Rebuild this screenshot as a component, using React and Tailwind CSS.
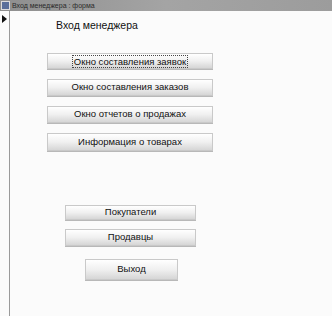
import React from 'react';

const buttonBase =
	'flex items-center justify-center border border-[#c9c9c9] bg-gradient-to-b from-[#ffffff] via-[#f0f0f0] to-[#d6d6d6] text-[9.5px] text-[#111] shadow-[0_1px_0_#b8b8b8]';

const MenuButton = ({ label, className, focused }) => (
	<button
		className={`${buttonBase} ${className} ${focused ? 'border-[#a9a3c9]' : ''}`}
	>
		<span className={focused ? 'border border-dotted border-[#444] px-[1px] leading-[11px]' : ''}>{label}</span>
	</button>
);

const App = () => {
	return (
		<div
			className="flex h-[316px] w-[332px] flex-col overflow-hidden bg-[#fbfbfb]"
			style={{ fontFamily: '"Liberation Sans", Arial, sans-serif' }}
		>
			{/* title bar */}
			<div className="flex h-[11px] items-center gap-[2px] bg-gradient-to-r from-[#8e8e8e] via-[#a4a4a4] to-[#9c9c9c] pl-[1px]">
				<div className="h-[9px] w-[9px] border border-[#dcdcdc] bg-[#5a6f9a]" />
				<span className="text-[7px] leading-none text-[#2a2a2a]">Вход менеджера : форма</span>
			</div>

			<div className="flex flex-1">
				{/* record selector */}
				<div className="w-[10px] border-r border-[#9a9a9a] bg-[#fbfbfb] pt-[4px] pl-[2px]">
					<div className="h-0 w-0 border-y-[4px] border-l-[5px] border-y-transparent border-l-[#111]" />
				</div>

				<div className="flex flex-1 flex-col">
					<div className="pt-[8px] pl-[46px] text-[10.5px] leading-[12px] text-[#111]">Вход менеджера</div>

					<div className="mt-[22px] flex flex-col gap-[10px] pl-[37px]">
						<MenuButton label="Окно составления заявок" className="h-[16px] w-[166px]" focused />
						<MenuButton label="Окно составления заказов" className="h-[17px] w-[166px]" />
						<MenuButton label="Окно отчетов о продажах" className="h-[17px] w-[166px]" />
						<MenuButton label="Информация о товарах" className="h-[18px] w-[166px]" />
					</div>

					<div className="mt-[54px] flex flex-col gap-[9px] pl-[55px]">
						<MenuButton label="Покупатели" className="h-[15px] w-[131px]" />
						<MenuButton label="Продавцы" className="h-[17px] w-[131px]" />
					</div>

					<div className="mt-[13px] pl-[75px]">
						<MenuButton label="Выход" className="h-[21px] w-[93px]" />
					</div>
				</div>
			</div>
		</div>
	);
};

export default App;
